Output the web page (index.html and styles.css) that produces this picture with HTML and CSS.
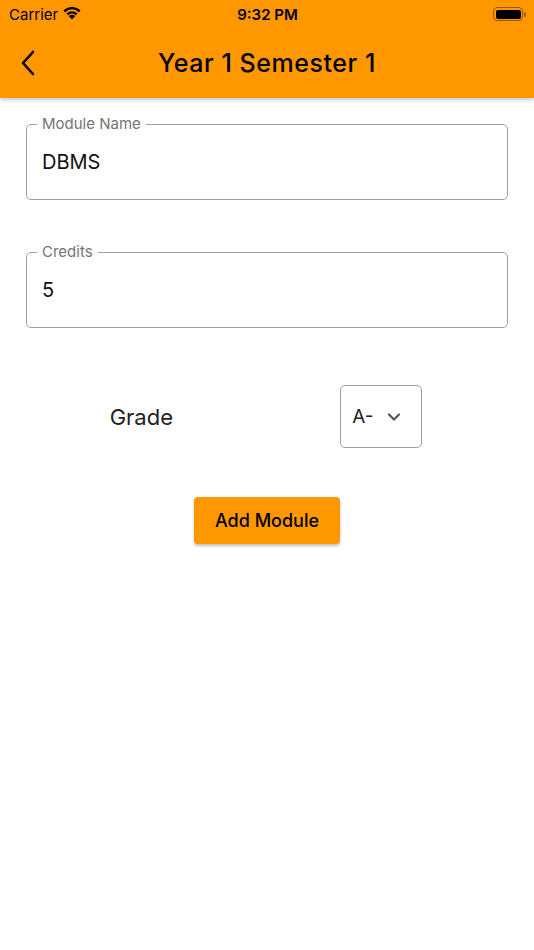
FILE: index.html
```html
<!DOCTYPE html>
<html>
<head>
<meta charset="utf-8">
<link rel="stylesheet" href="styles.css">
</head>
<body>
<header class="appbar">
  <div class="status">
    <div class="status-left">
      <span class="carrier">Carrier</span>
      <svg class="wifi" width="20" height="15" viewBox="0 0 20 15">
        <path d="M10 14.5 L6.8 11.1 A4.6 4.6 0 0 1 13.2 11.1 Z" fill="#000"/>
        <path d="M4.3 8.5 A8.2 8.2 0 0 1 15.7 8.5 L14.1 10.2 A5.9 5.9 0 0 0 5.9 10.2 Z" fill="#000"/>
        <path d="M1.4 5.5 A12.3 12.3 0 0 1 18.6 5.5 L17 7.2 A9.9 9.9 0 0 0 3 7.2 Z" fill="#000"/>
      </svg>
    </div>
    <span class="time">9:32 PM</span>
    <div class="battery">
      <div class="battery-body"><div class="battery-fill"></div></div>
      <div class="battery-cap"></div>
    </div>
  </div>
  <div class="toolbar">
    <svg class="back" width="16" height="26" viewBox="0 0 16 26">
      <path d="M13 2 L3 13 L13 24" fill="none" stroke="#000" stroke-width="2.6" stroke-linecap="round" stroke-linejoin="round"/>
    </svg>
    <h1 class="title">Year 1 Semester 1</h1>
  </div>
</header>

<main class="content">
  <div class="field">
    <span class="field-label">Module Name</span>
    <span class="field-value">DBMS</span>
  </div>
  <div class="field">
    <span class="field-label">Credits</span>
    <span class="field-value">5</span>
  </div>
  <div class="grade-row">
    <span class="grade-label">Grade</span>
    <div class="dropdown">
      <span class="dropdown-value">A-</span>
      <svg width="14" height="10" viewBox="0 0 14 10">
        <path d="M2 2.5 L7 7.5 L12 2.5" fill="none" stroke="#555" stroke-width="2.2" stroke-linecap="round" stroke-linejoin="round"/>
      </svg>
    </div>
  </div>
  <div class="actions">
    <button class="add-btn">Add Module</button>
  </div>
</main>
</body>
</html>
```
FILE: styles.css
```css
* { box-sizing: border-box; }
html, body { margin: 0; padding: 0; background: #fff; }
body {
  font-family: Inter, "Noto Sans", sans-serif;
  color: #111;
  width: 534px;
  height: 950px;
  overflow: hidden;
}
.appbar {
  background: #ff9800;
  height: 98px;
  box-shadow: 0 2px 4px rgba(0,0,0,0.22);
  position: relative;
}
.status {
  height: 28px;
  display: flex;
  align-items: center;
  justify-content: space-between;
  padding: 0 8px 0 9px;
}
.status-left { display: flex; align-items: center; gap: 4px; width: 100px; }
.carrier { font-size: 15px; color: #000; }
.wifi { margin-top: -3px; }
.time { font-size: 15px; font-weight: 600; color: #000; }
.battery { width: 100px; display: flex; justify-content: flex-end; align-items: center; }
.battery-body {
  width: 30px; height: 14px;
  border: 1.3px solid rgba(0,0,0,0.4);
  border-radius: 4px;
  padding: 1.5px;
}
.battery-fill { width: 100%; height: 100%; background: #000; border-radius: 2px; }
.battery-cap { width: 2px; height: 5px; background: rgba(0,0,0,0.4); border-radius: 0 2px 2px 0; margin-left: 1px; }
.toolbar {
  height: 70px;
  display: flex;
  align-items: center;
  position: relative;
  padding-left: 20px;
}
.back { position: relative; }
.title {
  position: absolute;
  left: 0; right: 0;
  text-align: center;
  margin: 0;
  font-size: 25px;
  font-weight: 500;
  letter-spacing: 0.55px;
  color: #000;
  pointer-events: none;
}
.content {
  padding: 26px 26px 0;
}
.field {
  position: relative;
  height: 76px;
  border: 1.3px solid #9e9e9e;
  border-radius: 5px;
  display: flex;
  align-items: center;
  padding: 0 15px;
  margin-bottom: 52px;
}
.field-label {
  position: absolute;
  top: -10px;
  left: 10px;
  padding: 0 5px;
  background: #fff;
  font-size: 15px;
  color: #757575;
  line-height: 18px;
}
.field-value { font-size: 20px; color: #111; }
.grade-row {
  display: flex;
  justify-content: space-around;
  align-items: center;
  margin-top: 57px;
  padding-right: 2px;
}
.grade-label { font-size: 22px; color: #222; }
.dropdown {
  width: 82px; height: 63px;
  border: 1.3px solid #9e9e9e;
  border-radius: 5px;
  display: flex;
  align-items: center;
  padding: 0 11px;
  gap: 13px;
}
.dropdown-value { font-size: 19px; color: #222; }
.actions { display: flex; justify-content: center; margin-top: 49px; }
.add-btn {
  background: #ff9800;
  border: none;
  border-radius: 4px;
  width: 146px; height: 47px;
  font-family: Inter, "Noto Sans", sans-serif;
  font-size: 18px;
  font-weight: 500;
  color: #000;
  box-shadow: 0 2px 3px rgba(0,0,0,0.25);
}
```
